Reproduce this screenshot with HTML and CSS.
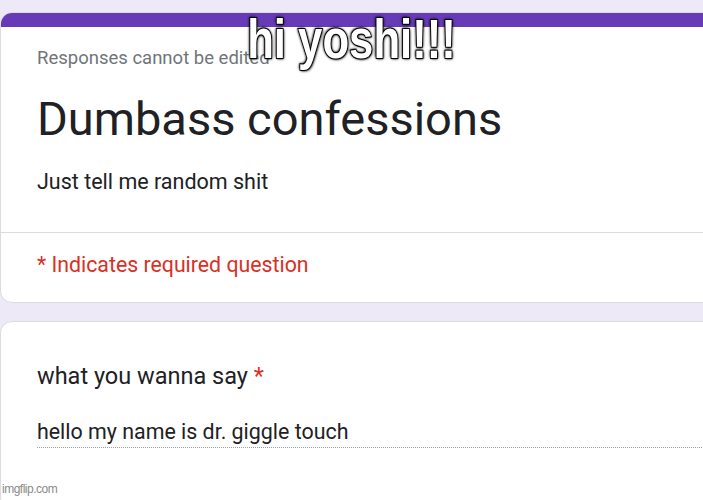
FILE: index.html
```html
<!DOCTYPE html>
<html lang="en">
<head>
    <meta charset="UTF-8">
    <title>Dumbass confessions</title>
    <link rel="stylesheet" href="styles.css">
</head>
<body>
    <div class="page">
        <!-- Header card -->
        <div class="card header-card">
            <div class="accent"></div>
            <div class="header-body">
                <p class="note">Responses cannot be edited</p>
                <h1 class="title">Dumbass confessions</h1>
                <p class="desc">Just tell me random shit</p>
            </div>
            <div class="required-row">
                <span class="required">* Indicates required question</span>
            </div>
        </div>

        <!-- Question card -->
        <div class="card question-card">
            <div class="question">what you wanna say <span class="star">*</span></div>
            <div class="answer">hello my name is dr. giggle touch</div>
        </div>
    </div>

    <div class="caption">hi yoshi!!!</div>
    <div class="watermark">imgflip.com</div>
</body>
</html>
```

FILE: styles.css
```css
body {
    margin: 0;
    background-color: #ede9f6;
    font-family: Roboto, "Liberation Sans", sans-serif;
    overflow: hidden;
    height: 500px;
}
.page {
    padding-top: 12px;
    margin-right: -30px;
}
.card {
    background-color: #fff;
    border: 1px solid #dadce0;
    border-radius: 12px;
    overflow: hidden;
}
.accent {
    height: 14px;
    background-color: #673ab7;
}
.header-body {
    padding: 20px 36px 37px;
    border-bottom: 1px solid #dadce0;
}
.note {
    margin: 0;
    font-size: 18.5px;
    line-height: 22px;
    color: #70757a;
}
.title {
    margin: 23px 0 0;
    font-size: 47px;
    line-height: 54px;
    font-weight: 400;
    color: #202124;
}
.desc {
    margin: 23px 0 0;
    font-size: 21.5px;
    line-height: 26px;
    color: #202124;
}
.required-row {
    padding: 19px 36px 22px;
    line-height: 26px;
}
.required {
    font-size: 21.3px;
    color: #d93025;
}
.question-card {
    margin-top: 18px;
    padding: 40px 36px 60px;
}
.question {
    font-size: 23.5px;
    line-height: 28px;
    color: #202124;
}
.star {
    color: #d93025;
}
.answer {
    margin-top: 29px;
    margin-right: -36px;
    padding-bottom: 2px;
    font-size: 21.4px;
    line-height: 26px;
    color: #202124;
    border-bottom: 1px dotted #9aa0a6;
}
.caption {
    position: absolute;
    top: 7px;
    left: 0;
    right: 0;
    text-align: center;
    font-family: "Liberation Sans", Arial, sans-serif;
    font-weight: 700;
    font-size: 56px;
    line-height: 64px;
    color: #fff;
    transform: scaleX(0.78);
    -webkit-text-stroke: 2px #000;
    paint-order: stroke fill;
    text-shadow: 0 0 3px #000, 1px 1px 3px #000, -1px -1px 3px #000;
}
.watermark {
    position: absolute;
    left: 2px;
    bottom: 4px;
    font-family: "Liberation Sans", sans-serif;
    font-size: 12px;
    letter-spacing: -0.5px;
    color: #8a8a8a;
}
```
